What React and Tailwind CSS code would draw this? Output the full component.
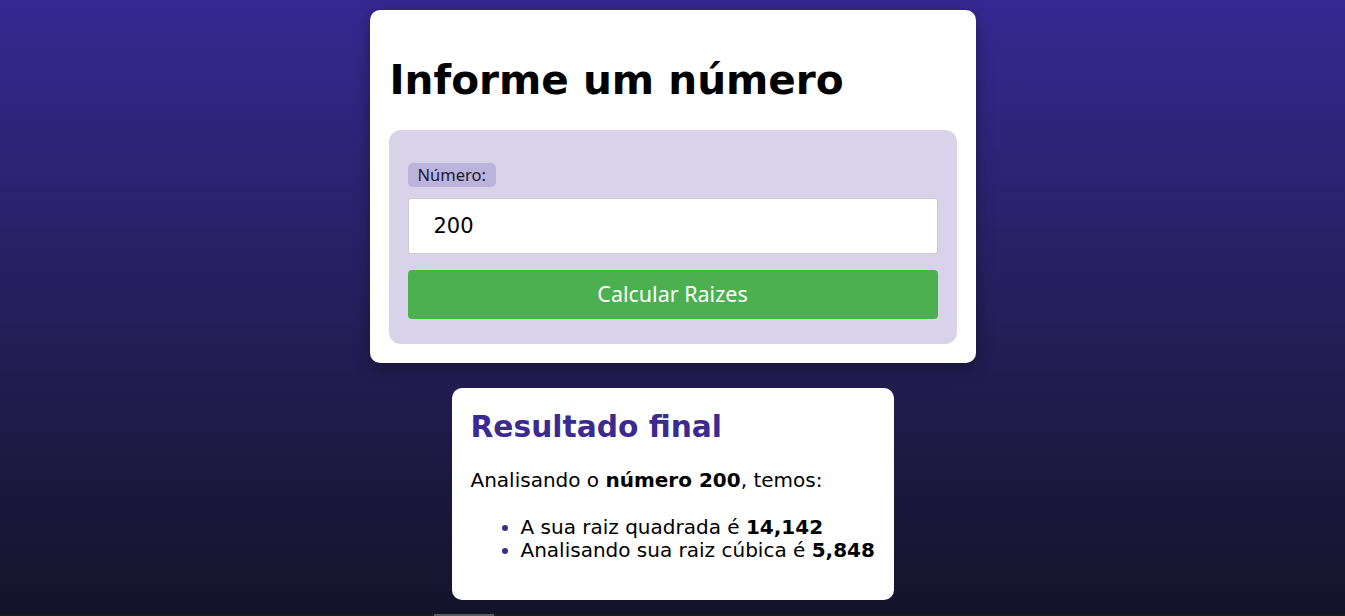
import React from 'react';

const App = () => {
    const numero = 200;

    return (
        <div className="bg-[#1b1b1f]">
            <div
                className="h-[614px] bg-gradient-to-b from-[#372892] to-[#15132a] flex flex-col items-center pt-[10px] text-black"
                style={{ fontFamily: '"DejaVu Sans", Verdana, sans-serif' }}
            >
                {/* Form card */}
                <div className="w-[606px] bg-white rounded-[10px] p-[19px] shadow-[0_4px_16px_rgba(0,0,0,0.35)]">
                    <h1 className="text-[40.6px] font-bold leading-[46px] mt-[28px] mb-[27px] pl-px">
                        Informe um número
                    </h1>

                    <div className="bg-[#d8d3e8] rounded-[12px] px-[19px] pt-[33px] pb-[25px] flex flex-col">
                        <label
                            className="self-start bg-[#bab3da] rounded-[5px] px-[10px] h-[24px] leading-[24px] text-[16.5px] text-[#1a1530]"
                            style={{ fontFamily: '"Noto Sans", sans-serif' }}
                        >
                            Número:
                        </label>
                        <input
                            type="number"
                            defaultValue={numero}
                            className="mt-[11px] h-[56px] w-full bg-white border border-[#cccccc] rounded-[3px] px-[25px] text-[21px] text-black outline-none"
                        />
                        <button
                            className="mt-[16px] h-[49px] w-full bg-[#4caf50] rounded-[4px] text-white text-[21.5px]"
                            style={{ fontFamily: '"Noto Sans", sans-serif' }}
                        >
                            Calcular Raizes
                        </button>
                    </div>
                </div>

                {/* Result card */}
                <div className="mt-[25px] w-[442px] bg-white rounded-[10px] px-[19px] pt-[22px] pb-[38px]">
                    <h2 className="text-[29.7px] font-bold text-[#3b2a91] leading-[34px]">
                        Resultado final
                    </h2>
                    <p className="mt-[25px] text-[20px] leading-[23px]">
                        Analisando o <strong>número {numero}</strong>, temos:
                    </p>
                    <ul className="mt-[24px] list-disc pl-[50px] text-[20px] leading-[23px] whitespace-nowrap marker:text-[#3b2a91]">
                        <li>A sua raiz quadrada é <strong>14,142</strong></li>
                        <li>Analisando sua raiz cúbica é <strong>5,848</strong></li>
                    </ul>
                </div>
            </div>

            {/* bottom strip */}
            <div className="h-[2px] flex">
                <div className="ml-[434px] w-[60px] bg-[#5a5a5a]" />
            </div>
        </div>
    );
};

export default App;
